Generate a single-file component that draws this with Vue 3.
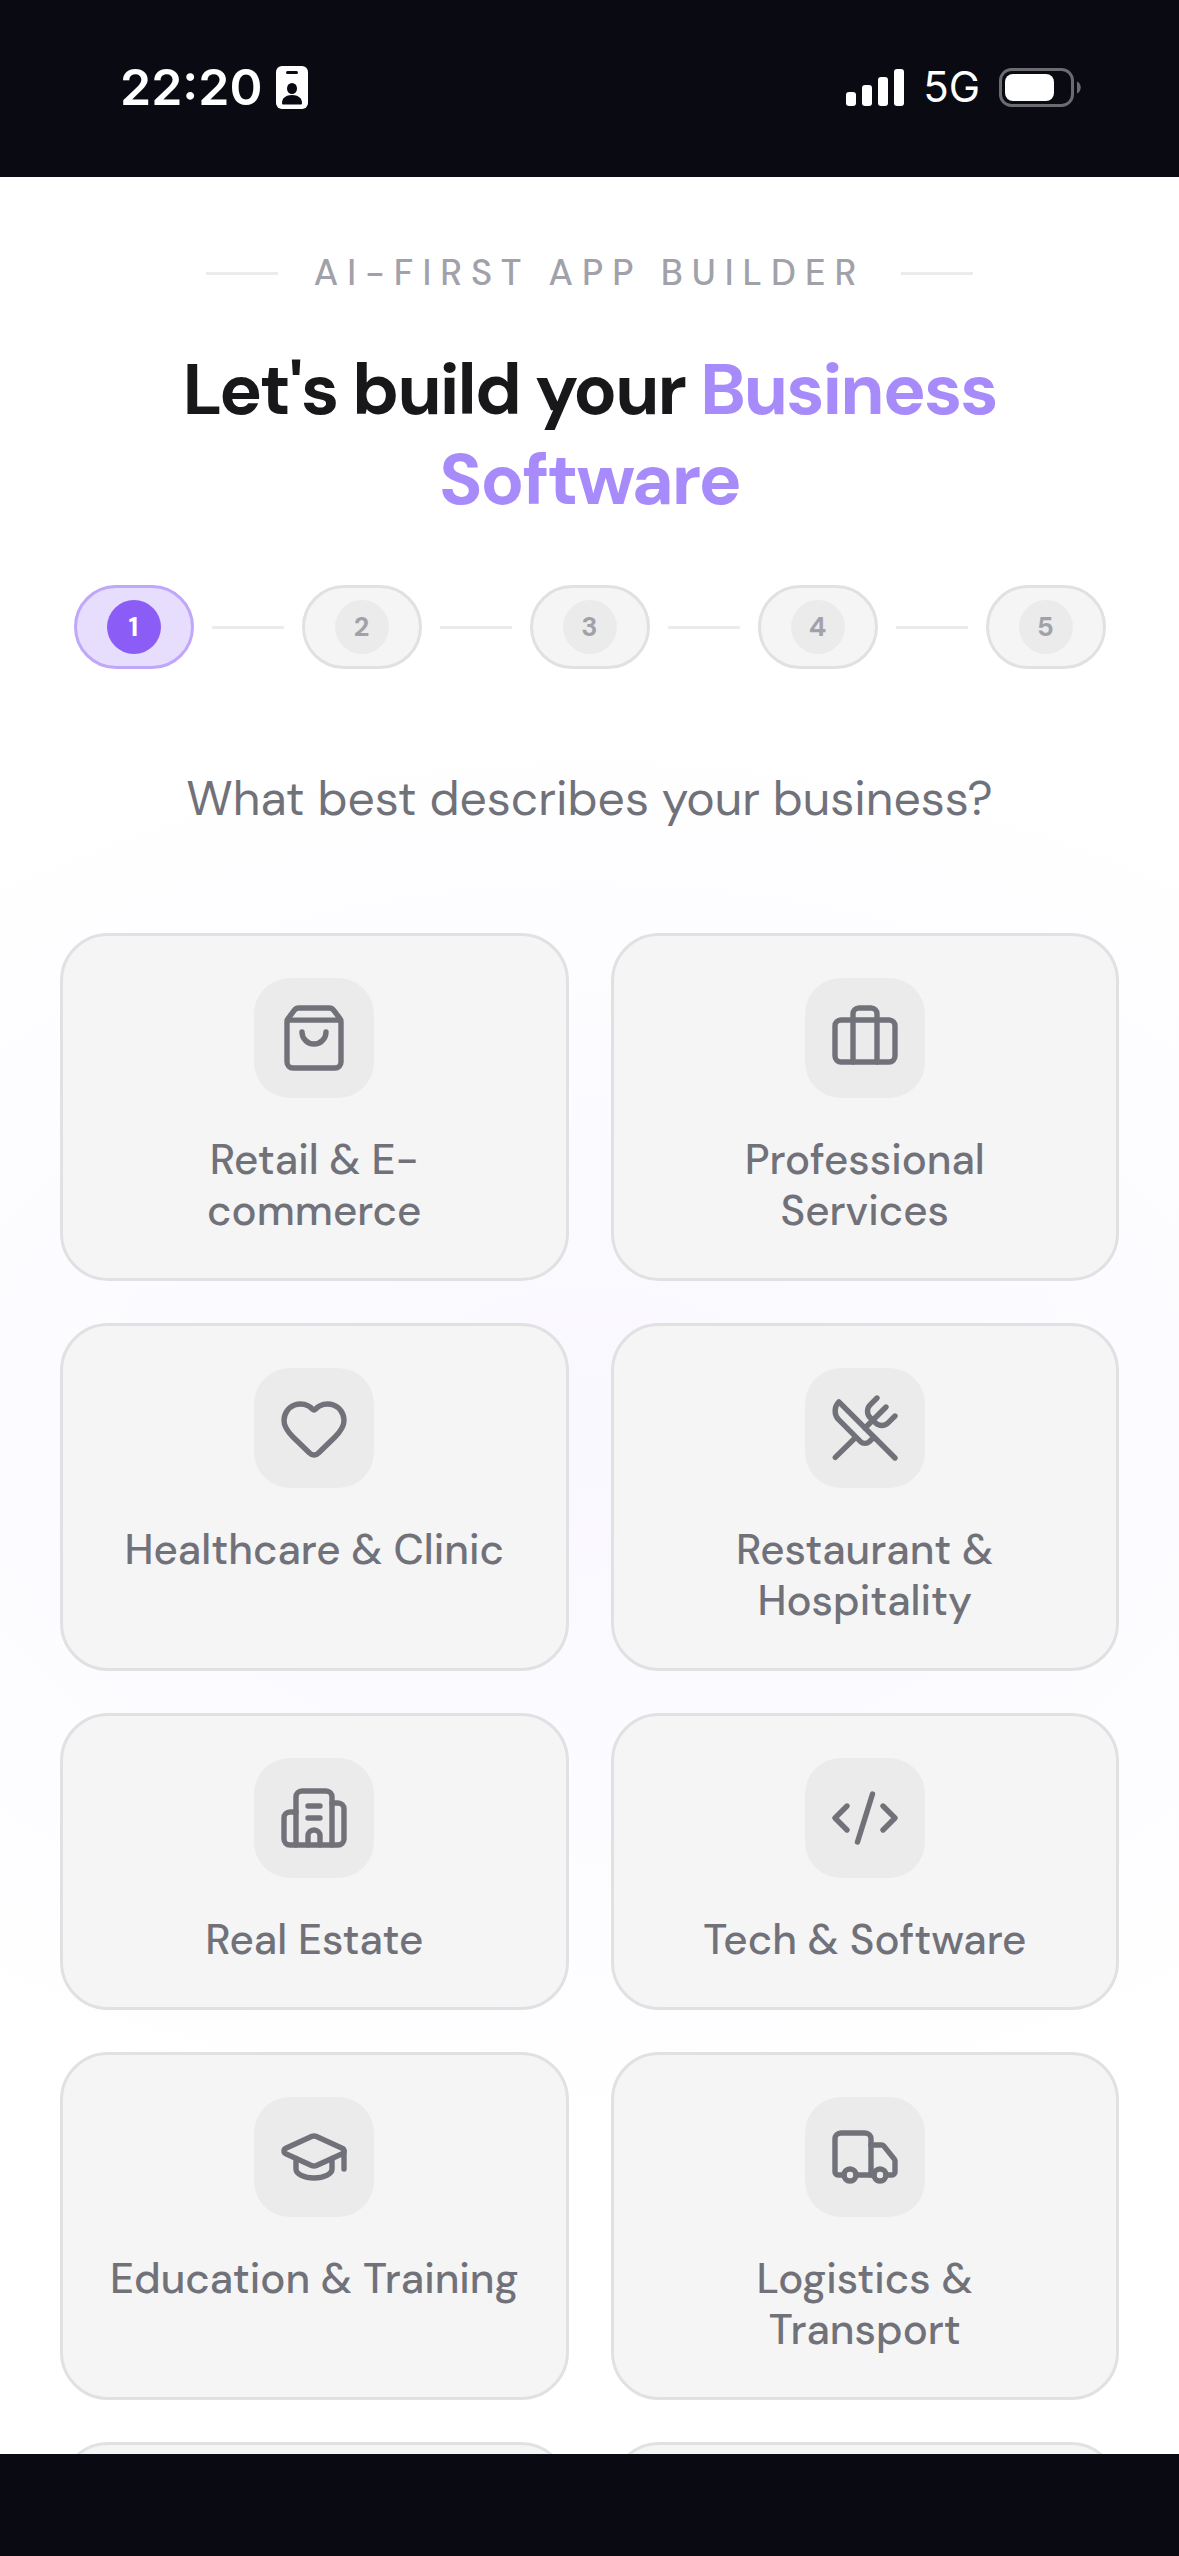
<script setup>
import { ref } from 'vue'

const steps = [1, 2, 3, 4, 5]
const current = ref(1)
const selected = ref('')

const categories = [
  {
    label: 'Retail & E-commerce',
    paths: [
      'M16 10a4 4 0 0 1-8 0',
      'M3.103 6.034h17.794',
      'M3.4 5.467a2 2 0 0 0-.4 1.2V20a2 2 0 0 0 2 2h14a2 2 0 0 0 2-2V6.667a2 2 0 0 0-.4-1.2l-2-2.667A2 2 0 0 0 17 2H7a2 2 0 0 0-1.6.8z'
    ]
  },
  {
    label: 'Professional Services',
    paths: [
      'M16 20V4a2 2 0 0 0-2-2h-4a2 2 0 0 0-2 2v16',
      'M4 6h16a2 2 0 0 1 2 2v10a2 2 0 0 1-2 2H4a2 2 0 0 1-2-2V8a2 2 0 0 1 2-2z'
    ]
  },
  {
    label: 'Healthcare & Clinic',
    paths: [
      'M2 9.5a5.5 5.5 0 0 1 9.591-3.676.56.56 0 0 0 .818 0A5.49 5.49 0 0 1 22 9.5c0 2.29-1.5 4-3 5.5l-5.492 5.313a2 2 0 0 1-3 .019L5 15c-1.5-1.5-3-3.2-3-5.5'
    ]
  },
  {
    label: 'Restaurant & Hospitality',
    paths: [
      'm16 2-2.3 2.3a3 3 0 0 0 0 4.2l1.8 1.8a3 3 0 0 0 4.2 0L22 8',
      'M15 15 3.3 3.3a4.2 4.2 0 0 0 0 6l7.3 7.3c.7.7 2 .7 2.8 0L15 15Zm0 0 7 7',
      'm2.1 21.8 6.4-6.3',
      'm19 5-7 7'
    ]
  },
  {
    label: 'Real Estate',
    paths: [
      'M10 12h4',
      'M10 8h4',
      'M14 21v-3a2 2 0 0 0-4 0v3',
      'M6 10H4a2 2 0 0 0-2 2v7a2 2 0 0 0 2 2h16a2 2 0 0 0 2-2V9a2 2 0 0 0-2-2h-2',
      'M6 21V5a2 2 0 0 1 2-2h8a2 2 0 0 1 2 2v16'
    ]
  },
  {
    label: 'Tech & Software',
    paths: ['m18 16 4-4-4-4', 'm6 8-4 4 4 4', 'm14.5 4-5 16']
  },
  {
    label: 'Education & Training',
    paths: [
      'M21.42 10.922a1 1 0 0 0-.019-1.838L12.83 5.18a2 2 0 0 0-1.66 0L2.6 9.08a1 1 0 0 0 0 1.832l8.57 3.908a2 2 0 0 0 1.66 0z',
      'M22 10v6',
      'M6 12.5V16a6 3 0 0 0 12 0v-3.5'
    ]
  },
  {
    label: 'Logistics & Transport',
    paths: [
      'M14 18V6a2 2 0 0 0-2-2H4a2 2 0 0 0-2 2v11a1 1 0 0 0 1 1h2',
      'M15 18H9',
      'M19 18h2a1 1 0 0 0 1-1v-3.65a1 1 0 0 0-.22-.624l-3.48-4.35A1 1 0 0 0 17.52 8H14',
      'M15 18a2 2 0 1 0 4 0a2 2 0 1 0-4 0',
      'M5 18a2 2 0 1 0 4 0a2 2 0 1 0-4 0'
    ]
  }
]
</script>

<template>
  <div class="screen">
    <header class="status">
      <div class="status-left">
        <span class="time">22:20</span>
        <svg class="badge" width="32" height="43" viewBox="0 0 32 43" aria-hidden="true">
          <rect width="32" height="43" rx="6" fill="#fff" />
          <rect x="10" y="5" width="12" height="3" rx="1.5" fill="#090a12" />
          <ellipse cx="16" cy="22.500" rx="5" ry="5.500" fill="#090a12" />
          <path d="M6 37c0-5 4-8 10-8s10 3 10 8c0 1-.5 1.500-1.500 1.500h-17C6.500 38.500 6 38 6 37z" fill="#090a12" />
        </svg>
      </div>
      <div class="status-right">
        <svg width="58" height="37" viewBox="0 0 58 37" fill="#fff" aria-hidden="true">
          <rect x="0" y="23" width="10" height="14" rx="3" />
          <rect x="16" y="16" width="10" height="21" rx="3" />
          <rect x="32" y="8" width="10" height="29" rx="3" />
          <rect x="48" y="0" width="10" height="37" rx="3" />
        </svg>
        <span class="network">5G</span>
        <svg width="82" height="39" viewBox="0 0 82 39" aria-hidden="true">
          <rect x="1.500" y="1.500" width="72" height="36" rx="11" fill="none" stroke="#6b6b71" stroke-width="3" />
          <rect x="6" y="6" width="49" height="27" rx="8" fill="#fff" />
          <path d="M78 13.500c5 2 5 10 0 12z" fill="#6b6b71" />
        </svg>
      </div>
    </header>

    <main class="content">
      <p class="eyebrow"><span>AI-First App Builder</span></p>
      <h1>Let's build your <em>Business Software</em></h1>

      <ol class="steps">
        <li v-for="step in steps" :key="step" :class="{ active: step === current }">
          <span class="pill"><span class="dot">{{ step }}</span></span>
        </li>
      </ol>

      <h2>What best describes your business?</h2>

      <div class="grid">
        <button
          v-for="item in categories"
          :key="item.label"
          type="button"
          class="card"
          :aria-pressed="selected === item.label"
          @click="selected = item.label"
        >
          <span class="icon">
            <svg viewBox="0 0 24 24" aria-hidden="true">
              <path v-for="d in item.paths" :key="d" :d="d" />
            </svg>
          </span>
          <span class="label">{{ item.label }}</span>
        </button>
        <div class="card" aria-hidden="true"></div>
        <div class="card" aria-hidden="true"></div>
      </div>
    </main>

    <footer class="home-bar"></footer>
  </div>
</template>

<style>
body {
  margin: 0;
  background: #090a12;
}
</style>

<style scoped>
.screen {
  display: flex;
  flex-direction: column;
  height: 100vh;
  font-family: "DM Sans", Inter, "Liberation Sans", sans-serif;
  background: #fff;
}

.status {
  flex: none;
  display: flex;
  justify-content: space-between;
  box-sizing: border-box;
  height: 177px;
  padding: 57px 98px 0 120px;
  background: #090a12;
  color: #fff;
  font-family: Inter, "Liberation Sans", sans-serif;
}

.status-left,
.status-right {
  display: flex;
  align-items: center;
  height: 60px;
}

.status-left {
  gap: 14px;
}

.status-right {
  gap: 19px;
}

.time {
  font-size: 50px;
  font-weight: 600;
  line-height: 60px;
}

.network {
  font-size: 42px;
  line-height: 60px;
}

.content {
  flex: 1;
  min-height: 0;
  overflow: hidden;
  box-sizing: border-box;
  padding: 66px 60px 0;
  background: radial-gradient(ellipse 1080px 720px at 50% 55%, rgba(139, 110, 250, 0.05), rgba(139, 110, 250, 0)) #fff;
}

.eyebrow {
  display: flex;
  align-items: center;
  justify-content: center;
  gap: 36px;
  margin: 0 0 36px;
  color: #a1a1aa;
  font-size: 36px;
  font-weight: 500;
  line-height: 60px;
  letter-spacing: 9px;
  text-transform: uppercase;
}

.eyebrow::before,
.eyebrow::after {
  content: "";
  width: 72px;
  height: 3px;
  background: #ebebeb;
}

h1 {
  margin: 0;
  padding: 6px 60px 0;
  color: #18181b;
  font-size: 72px;
  font-weight: 700;
  line-height: 90px;
  letter-spacing: -2px;
  text-align: center;
}

h1 em {
  color: #a78bfa;
  font-style: normal;
}

.steps {
  display: flex;
  justify-content: center;
  gap: 18px;
  margin: 60px 0 0;
  padding: 0;
  list-style: none;
}

.steps li {
  display: flex;
  align-items: center;
  gap: 18px;
}

.steps li + li::before {
  content: "";
  width: 72px;
  height: 3px;
  background: #ebebeb;
}

.pill {
  padding: 12px 30px;
  border: 3px solid #e1e1e2;
  border-radius: 42px;
  background: #f5f5f5;
}

.dot {
  display: block;
  width: 54px;
  height: 54px;
  border-radius: 50%;
  background: #ebebeb;
  color: #a1a1aa;
  font-size: 27px;
  font-weight: 700;
  line-height: 54px;
  text-align: center;
}

.active .pill {
  border-color: #c0a7fa;
  background: #e7ddfc;
}

.active .dot {
  background: #8b5cf6;
  color: #fff;
}

h2 {
  margin: 94px 0 98px;
  color: #71717a;
  font-size: 48px;
  font-weight: 400;
  line-height: 72px;
  text-align: center;
}

.grid {
  display: grid;
  grid-template-columns: 1fr 1fr;
  gap: 42px;
}

.card {
  display: flex;
  flex-direction: column;
  align-items: center;
  gap: 36px;
  min-height: 297px;
  margin: 0;
  padding: 42px 45px;
  box-sizing: border-box;
  border: 3px solid #e1e1e3;
  border-radius: 48px;
  background: #f5f5f5;
  color: #71717a;
  font: inherit;
}

.icon {
  display: flex;
  align-items: center;
  justify-content: center;
  flex: none;
  width: 120px;
  height: 120px;
  border-radius: 36px;
  background: #ebebeb;
}

.icon svg {
  width: 72px;
  height: 72px;
  fill: none;
  stroke: currentColor;
  stroke-width: 1.8;
  stroke-linecap: round;
  stroke-linejoin: round;
}

.label {
  font-size: 42px;
  font-weight: 500;
  line-height: 51px;
  text-align: center;
}

.home-bar {
  flex: none;
  height: 102px;
  background: #090a12;
}
</style>
